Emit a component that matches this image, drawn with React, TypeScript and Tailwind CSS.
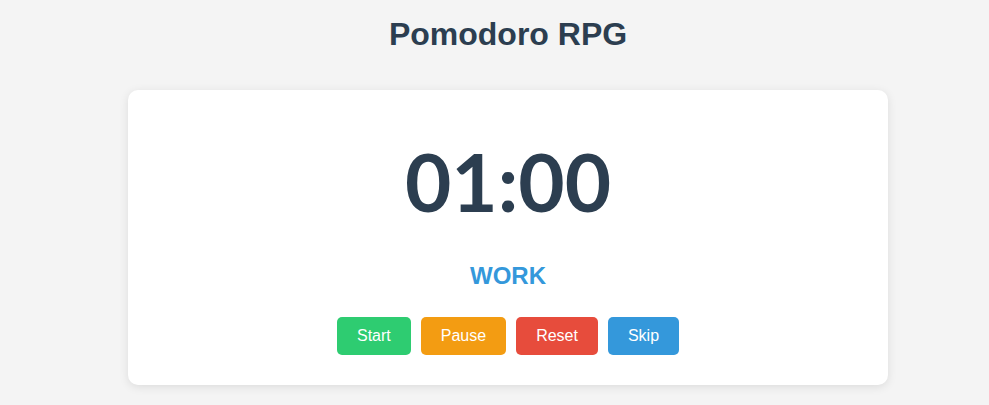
import React from 'react';

const buttons = [
  { label: 'Start', color: 'bg-[#2ecc71]' },
  { label: 'Pause', color: 'bg-[#f39c12]' },
  { label: 'Reset', color: 'bg-[#e74c3c]' },
  { label: 'Skip', color: 'bg-[#3498db]' },
];

export default function App() {
  return (
    <div
      className="min-h-screen bg-[#f4f4f4] pl-[27px] pt-4 flex flex-col items-center"
      style={{ fontFamily: '"Liberation Sans", Arial, sans-serif' }}
    >
      <h1 className="text-[32px] leading-[37px] font-bold text-[#2c3e50]">Pomodoro RPG</h1>

      {/* Timer card */}
      <div className="mt-[37px] w-[760px] bg-white rounded-[10px] shadow-[0_2px_10px_rgba(0,0,0,0.1)] pt-[30px] pb-[30px] flex flex-col items-center">
        <div
          className="mt-[21px] text-[80px] leading-[80px] font-bold text-[#2c3e50]"
          style={{ fontFamily: 'Lato, "Liberation Sans", sans-serif' }}
        >
          01:00
        </div>
        <div className="mt-[41px] text-[24px] leading-[28px] font-bold text-[#3498db]">WORK</div>
        <div className="mt-[27px] flex gap-[10px]">
          {buttons.map((b) => (
            <button
              key={b.label}
              className={`${b.color} h-[38px] px-5 rounded-[5px] text-white text-base`}
            >
              {b.label}
            </button>
          ))}
        </div>
      </div>
    </div>
  );
}
